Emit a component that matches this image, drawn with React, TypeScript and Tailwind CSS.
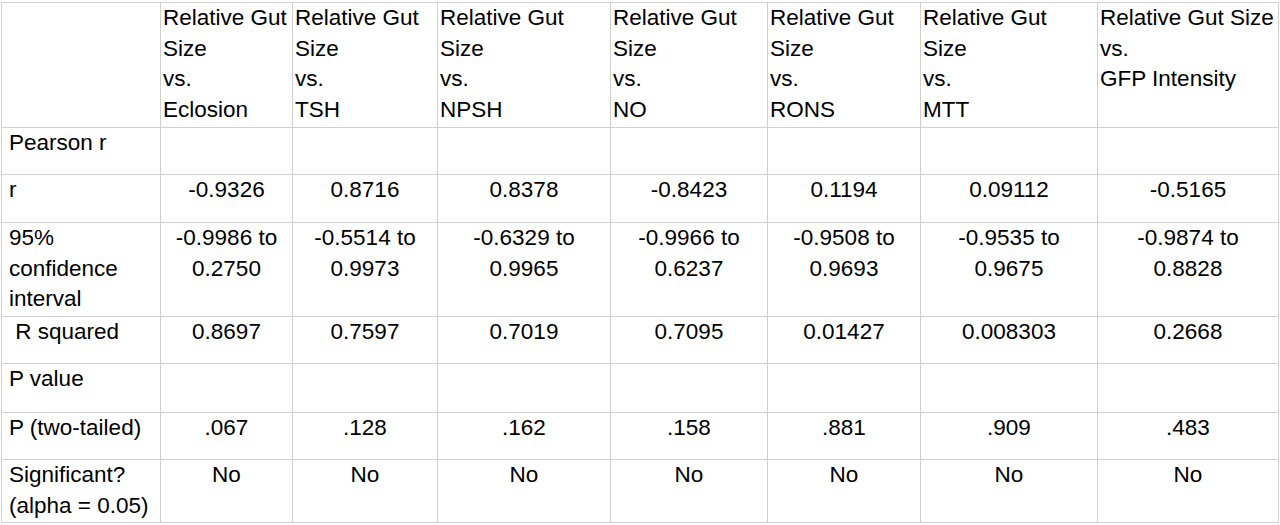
const cols = [159, 132, 145, 173, 157, 153, 177, 181]

const headers: string[][] = [
  ["Relative Gut", "Size", "vs.", "Eclosion"],
  ["Relative Gut", "Size", "vs.", "TSH"],
  ["Relative Gut", "Size", "vs.", "NPSH"],
  ["Relative Gut", "Size", "vs.", "NO"],
  ["Relative Gut", "Size", "vs.", "RONS"],
  ["Relative Gut", "Size", "vs.", "MTT"],
  ["Relative Gut Size", "vs.", "GFP Intensity"],
]

type Row = { label: string[]; h: string; values: string[][] }

const rows: Row[] = [
  { label: ["Pearson r"], h: "h-[47px]", values: [] },
  {
    label: ["r"],
    h: "h-[48px]",
    values: [["-0.9326"], ["0.8716"], ["0.8378"], ["-0.8423"], ["0.1194"], ["0.09112"], ["-0.5165"]],
  },
  {
    label: ["95%", "confidence", "interval"],
    h: "h-[94px]",
    values: [
      ["-0.9986 to", "0.2750"],
      ["-0.5514 to", "0.9973"],
      ["-0.6329 to", "0.9965"],
      ["-0.9966 to", "0.6237"],
      ["-0.9508 to", "0.9693"],
      ["-0.9535 to", "0.9675"],
      ["-0.9874 to", "0.8828"],
    ],
  },
  {
    label: ["\u00a0R squared"],
    h: "h-[47px]",
    values: [["0.8697"], ["0.7597"], ["0.7019"], ["0.7095"], ["0.01427"], ["0.008303"], ["0.2668"]],
  },
  { label: ["P value"], h: "h-[49px]", values: [] },
  {
    label: ["P (two-tailed)"],
    h: "h-[47px]",
    values: [[".067"], [".128"], [".162"], [".158"], [".881"], [".909"], [".483"]],
  },
  {
    label: ["Significant?", "(alpha = 0.05)"],
    h: "h-[63px]",
    values: [["No"], ["No"], ["No"], ["No"], ["No"], ["No"], ["No"]],
  },
]

const cell = "border border-[#d0d0d0] align-top p-0"

function Lines({ lines }: { lines: string[] }) {
  return (
    <>
      {lines.map((l, i) => (
        <div key={i} className="whitespace-pre">
          {l}
        </div>
      ))}
    </>
  )
}

export default function App() {
  return (
    <div className="w-[1280px] h-[525px] bg-white overflow-hidden pt-[2px] pl-[1px]">
      <table
        className="table-fixed border-collapse w-[1277px] text-black text-[22.5px] leading-[30.5px]"
        style={{ fontFamily: '"Liberation Sans", Arial, sans-serif' }}
      >
        <colgroup>
          {cols.map((w, i) => (
            <col key={i} style={{ width: w }} />
          ))}
        </colgroup>
        <tbody>
          {/* Header */}
          <tr className="h-[125px]">
            <td className={cell}></td>
            {headers.map((h, i) => (
              <td key={i} className={`${cell} px-[2px]`}>
                <Lines lines={h} />
              </td>
            ))}
          </tr>

          {rows.map((r, ri) => (
            <tr key={ri} className={r.h}>
              <td className={`${cell} pl-[7px]`}>
                <Lines lines={r.label} />
              </td>
              {Array.from({ length: 7 }).map((_, ci) => (
                <td key={ci} className={`${cell} text-center`}>
                  {r.values[ci] ? <Lines lines={r.values[ci]} /> : null}
                </td>
              ))}
            </tr>
          ))}
        </tbody>
      </table>
    </div>
  )
}
